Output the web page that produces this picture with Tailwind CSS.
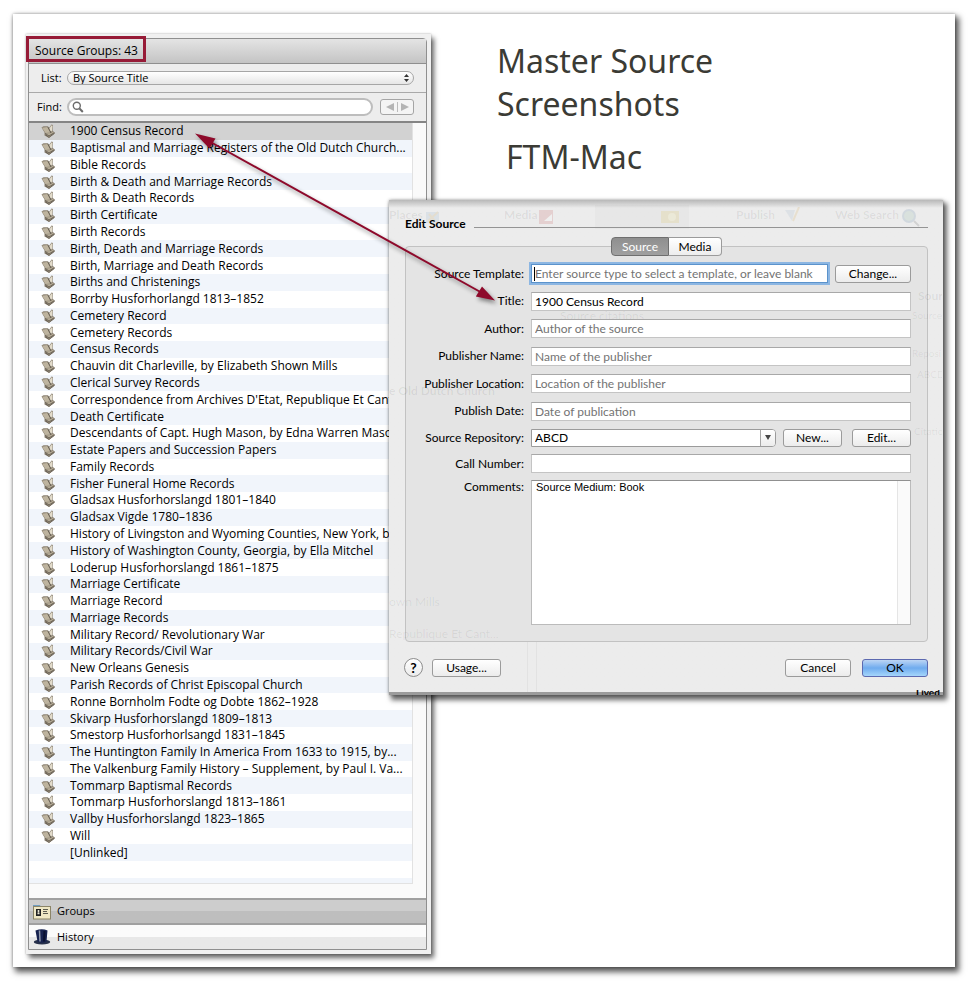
<!DOCTYPE html>
<html lang="en">
<head>
<meta charset="utf-8">
<title>Master Source Screenshots</title>
<script src="https://cdn.jsdelivr.net/npm/@tailwindcss/browser@4"></script>
</head>
<body class="flex min-h-screen bg-white pt-[14px] pr-[14px] pb-[17px] pl-[13px] font-['Open_Sans','Noto_Sans',sans-serif] text-xs text-black">
<svg class="hidden" aria-hidden="true">
  <symbol id="book" viewBox="0 0 16 16">
    <path d="M1.500 4.500 3.500 3.300 8 3.300 9 5 11.500 1.500 13 2 12.500 7.500 15 10 9 15 4.500 12.500 4.500 9.500Z" fill="#8a8172"/>
    <path d="M2 4.700 7.600 4 10.500 9.500 5.500 10Z" fill="#beb49f"/>
    <path d="M9.300 5.500 11.700 2.300 12.500 2.700 11.800 8.500 10.300 8Z" fill="#e3dccb"/>
    <path d="M5 10.500 10.500 10 13 8.500 14.500 10 9 14.200Z" fill="#b3a994"/>
    <path d="M7.800 4 11 10M5.200 10.400 9 13 14.300 9.700" fill="none" stroke="#5b5347" stroke-width=".8"/>
    <path d="M5.500 11.800 9 14.300 14.500 10.500" fill="none" stroke="#5b5347" stroke-width=".7"/>
  </symbol>
</svg>

<main class="relative flex flex-1 bg-white shadow-[3px_4px_6px_1px_rgba(0,0,0,0.65),0_0_3px_rgba(0,0,0,0.35)]">

  <aside class="mt-5 mb-[13px] ml-[13px] flex w-[405px] shrink-0 flex-col bg-[#f0f0f0] pt-[4px] pr-[4px] pb-[4px] pl-[2px] shadow-[3px_4px_5px_rgba(0,0,0,0.6),0_0_2px_rgba(0,0,0,0.3)]">
    <div class="flex flex-1 flex-col rounded-t border border-[#8f8f8f] bg-[#ededed]">
      <header class="relative flex h-[25px] items-center border-b border-[#8f8f8f] bg-linear-to-b from-[#e4e4e4] to-[#c4c4c4] pl-[6px]">
        <h2>Source Groups: 43</h2>
        <span class="absolute -top-[3px] -left-[3px] h-[26px] w-[120px] border-3 border-[#971b37]"></span>
      </header>
      <div class="flex h-[29px] items-center border-b border-[#a9a9a9] pr-3 pl-3 text-[11px]">
        <label for="list" class="w-[26px]">List:</label>
        <span class="relative flex flex-1">
          <select id="list" class="h-[14px] w-full appearance-none rounded-full border border-[#a6a6a6] bg-linear-to-b from-white to-[#e6e6e6] pl-[5px] text-[11px] leading-3"><option>By Source Title</option></select>
          <svg class="pointer-events-none absolute top-[3px] right-[5px] h-2 w-[5px]" viewBox="0 0 5 8"><path d="M0 3 2.500 0 5 3ZM0 5 2.500 8 5 5Z" fill="#333"/></svg>
        </span>
      </div>
      <div class="flex h-[30px] items-center border-b-2 border-[#858585] pr-3 pl-2 text-[11px]">
        <label for="find" class="w-[30px]">Find:</label>
        <span class="relative flex flex-1">
          <input id="find" type="search" class="h-[18px] w-full rounded-full border-2 border-[#bdbdbd] bg-white pl-5">
          <svg class="pointer-events-none absolute top-[3px] left-[5px] size-3" viewBox="0 0 12 12" fill="none" stroke="#6b6b6b"><circle cx="4.800" cy="4.800" r="3.500" stroke-width="1.400"/><path d="m7.500 7.500 3.300 3.500" stroke-width="2"/></svg>
        </span>
        <span class="ml-[7px] flex h-4 w-[34px] items-center justify-center gap-[3px] rounded-[3px] border border-[#a5a5a5] bg-[#f4f4f4]">
          <button aria-label="Previous"><svg class="h-2 w-2" viewBox="0 0 8 8"><path d="M8 0v8L0 4Z" fill="#b4b4b4"/></svg></button>
          <span class="h-[10px] w-px bg-[#bbb]"></span>
          <button aria-label="Next"><svg class="h-2 w-2" viewBox="0 0 8 8"><path d="M0 0v8l8-4Z" fill="#b4b4b4"/></svg></button>
        </span>
      </div>
      <div class="flex flex-1 flex-col bg-[#fafafa] pr-[13px]">
        <ul id="groups" class="grid h-[755px] auto-rows-fr border-r border-[#e2e2e2] bg-white"></ul>
        <div class="h-[6px] border-r border-b border-[#e2e2e2] bg-[#f1f5fb]"></div>
      </div>
      <button class="flex h-[27px] items-center gap-[6px] border-y-2 border-[#a0a0a0] bg-linear-to-b from-[#cdcdcd] from-50% to-[#bebebe] to-50% pl-1 text-[11px]">
        <svg class="h-4 w-[18px]" viewBox="0 0 18 16"><path d="M0 1h7l1 2H0Z" fill="#6f9cc0"/><rect x=".5" y="2.500" width="17" height="12.500" fill="#efe7c4" stroke="#8b8467"/><rect x="3" y="5" width="5" height="7" fill="#222"/><path d="M5.500 6v2.500M4.500 9.500h2" stroke="#e9e6d5" stroke-width="1.600"/><path d="M10 5.500h5M10 7.500h4M10 9.500h5" stroke="#5b5b50"/></svg>
        Groups
      </button>
      <button class="flex h-6 items-center gap-[6px] bg-linear-to-b from-[#fbfbfb] from-50% to-[#e8e8e8] to-50% pl-1 text-[11px]">
        <svg class="h-4 w-[18px]" viewBox="0 0 18 16"><ellipse cx="9" cy="13" rx="8.200" ry="2.600" fill="#27304a"/><path d="M2.500 1.500Q9-.8 14.500 1.500L13.500 12.500Q9 15 4.500 12.500Z" fill="#17224f"/><path d="M6.500 1.500 7 12.500" stroke="#8f97ab" stroke-width="1.500"/><path d="M11.500 2 11 12.500" stroke="#0a1030" stroke-width="2"/></svg>
        History
      </button>
    </div>
  </aside>

  <h1 class="ml-[66px] pt-[25px] font-['Noto_Sans',sans-serif] text-[32px] leading-[43px] text-[#3b3b35]">
    <span class="block">Master Source<br>Screenshots</span>
    <span class="mt-[10px] ml-[9px] block">FTM-Mac</span>
  </h1>

  <form class="absolute top-[186px] left-[376px] h-[495px] w-[554px] bg-[#ececec] bg-linear-to-b from-[#b8b8b8] to-[#ececec] to-[8px] pt-[18px] pr-[15px] pl-4 font-['Lato','Open_Sans',sans-serif] shadow-[3px_4px_5px_1px_rgba(0,0,0,0.6),0_0_3px_rgba(0,0,0,0.35)]" onsubmit="return false">
    <div class="pointer-events-none absolute inset-0 overflow-hidden whitespace-nowrap text-black/7" aria-hidden="true">
      <div class="absolute top-[7px] left-0 flex w-full font-bold"><span class="w-[115px]">Places</span><span>Media</span></div>
      <div class="absolute top-[7px] left-[347px] flex font-bold"><span class="w-[99px]">Publish</span><span>Web Search</span></div>
      <div class="absolute top-[5px] left-[206px] h-6 w-[94px] bg-black/2"></div>
      <svg class="absolute top-[9px] left-[36px] h-4 w-4 opacity-15" viewBox="0 0 16 16" fill="none"><path d="M1 3h13v11H1Z" fill="#7fa5c8"/><path d="M3 12 13 3M4 5l6 7" stroke="#b89030" stroke-width="2"/></svg>
      <svg class="absolute top-[9px] left-[149px] h-4 w-4 opacity-20" viewBox="0 0 16 16"><path d="M1 1h14v14H1Z" fill="#c86464"/><path d="M6 12 14 5v7Z" fill="#fff"/></svg>
      <svg class="absolute top-[9px] left-[272px] h-4 w-5 opacity-20" viewBox="0 0 20 16"><path d="M0 2h18v12H0Z" fill="#dfc560"/><circle cx="11" cy="8" r="4" fill="#fff3a0"/></svg>
      <svg class="absolute top-[7px] left-[395px] h-4 w-4 opacity-15" viewBox="0 0 16 16" fill="none"><path d="M1 3h10L8 14Z" fill="#8fa9c4"/><path d="M15 0 9 14" stroke="#d09a30" stroke-width="2"/></svg>
      <svg class="absolute top-[8px] left-[512px] h-5 w-5 opacity-15" viewBox="0 0 20 20" fill="none"><circle cx="8" cy="8" r="6" fill="#72a58d" stroke="#3f6c93" stroke-width="2"/><path d="m13 13 5 5" stroke="#444" stroke-width="2"/></svg>
      <div class="absolute bottom-[3px] left-[138px] h-[51px] w-[10px] border-x border-black/4"></div>
    </div>

    <div class="relative flex items-start gap-2">
      <h2 class="leading-3 font-bold">Edit Source</h2>
      <span class="mt-[9px] h-px flex-1 bg-[#949494]"></span>
    </div>

    <div class="relative mt-4 rounded border border-[#c2c2c2] bg-[#e4e4e4] px-4 pt-[17px] pb-4">
      <div class="absolute inset-y-0 -right-[15px] -left-[17px] overflow-hidden whitespace-nowrap text-black/7" aria-hidden="true">
        <span class="absolute top-[61px] left-[171px]">Source citations</span>
        <span class="absolute top-[136px] left-0 font-bold">e Old Dutch Church</span>
        <span class="absolute top-[347px] left-0">own Mills</span>
        <span class="absolute top-[379px] left-0">Republique Et Cant...</span>
        <span class="absolute top-[41px] left-[529px] font-bold">Sour</span>
        <span class="absolute top-[62px] left-[523px] text-[10px]">Source</span>
        <span class="absolute top-[100px] left-[523px] text-[10px]">Reposi</span>
        <span class="absolute top-[121px] left-[528px] text-[10px]">ABCD</span>
        <span class="absolute top-[178px] left-[525px] text-[10px]">Citatio</span>
      </div>
      <div class="absolute inset-x-0 -top-[10px] flex justify-center">
        <button type="button" class="h-[19px] w-[58px] rounded-l border border-[#6f6f6f] bg-linear-to-b from-[#8f8f8f] to-[#a0a0a0] leading-4 text-white">Source</button>
        <button type="button" class="h-[19px] w-[53px] rounded-r border border-l-0 border-[#9b9b9b] bg-linear-to-b from-white to-[#ededed] leading-4">Media</button>
      </div>

      <div class="relative flex h-[157px] flex-col justify-between">
        <div class="flex h-[19px] items-center gap-[7px]">
          <label for="tpl" class="w-[102px] shrink-0 text-right whitespace-nowrap">Source Template:</label>
          <input id="tpl" placeholder="Enter source type to select a template, or leave blank" class="h-[19px] min-w-0 flex-1 border border-[#5b93cc] bg-white px-[3px] outline-2 outline-[#8cb6e2] placeholder:text-[#737373]">
          <button type="button" class="h-[18px] w-[76px] rounded-[3px] border border-[#9b9b9b] bg-linear-to-b from-white to-[#ececec] leading-4">Change...</button>
          <span class="absolute top-[3px] left-[112px] h-[14px] w-px bg-black"></span>
        </div>
        <div class="flex h-[19px] items-center gap-[7px]">
          <label for="ttl" class="w-[102px] shrink-0 text-right whitespace-nowrap">Title:</label>
          <input id="ttl" value="1900 Census Record" class="h-[19px] min-w-0 flex-1 border border-t-[#a8a8a8] border-[#c4c4c4] bg-white px-[3px]">
        </div>
        <div class="flex h-[19px] items-center gap-[7px]">
          <label for="aut" class="w-[102px] shrink-0 text-right whitespace-nowrap">Author:</label>
          <input id="aut" placeholder="Author of the source" class="h-[19px] min-w-0 flex-1 border border-t-[#a8a8a8] border-[#c4c4c4] bg-white px-[3px] placeholder:text-[#737373]">
        </div>
        <div class="flex h-[19px] items-center gap-[7px]">
          <label for="pub" class="w-[102px] shrink-0 text-right whitespace-nowrap">Publisher Name:</label>
          <input id="pub" placeholder="Name of the publisher" class="h-[19px] min-w-0 flex-1 border border-t-[#a8a8a8] border-[#c4c4c4] bg-white px-[3px] placeholder:text-[#737373]">
        </div>
        <div class="flex h-[19px] items-center gap-[7px]">
          <label for="loc" class="w-[102px] shrink-0 text-right whitespace-nowrap">Publisher Location:</label>
          <input id="loc" placeholder="Location of the publisher" class="h-[19px] min-w-0 flex-1 border border-t-[#a8a8a8] border-[#c4c4c4] bg-white px-[3px] placeholder:text-[#737373]">
        </div>
        <div class="flex h-[19px] items-center gap-[7px]">
          <label for="dat" class="w-[102px] shrink-0 text-right whitespace-nowrap">Publish Date:</label>
          <input id="dat" placeholder="Date of publication" class="h-[19px] min-w-0 flex-1 border border-t-[#a8a8a8] border-[#c4c4c4] bg-white px-[3px] placeholder:text-[#737373]">
        </div>
      </div>
      <div class="relative mt-[7px] flex flex-col gap-[7px]">
        <div class="flex h-[19px] items-center">
          <label for="rep" class="mr-[7px] w-[102px] shrink-0 text-right whitespace-nowrap">Source Repository:</label>
          <span class="relative flex min-w-0 flex-1">
            <select id="rep" class="h-[18px] w-full appearance-none rounded-r border border-[#9b9b9b] bg-white pl-[3px] leading-4"><option>ABCD</option></select>
            <span class="pointer-events-none absolute top-px right-px flex h-4 w-[15px] items-center justify-center rounded-r-[3px] border-l border-[#a5a5a5] bg-linear-to-b from-white to-[#ececec]"><svg class="h-[5px] w-[6px]" viewBox="0 0 6 5"><path d="M0 0h6L3 5Z" fill="#444"/></svg></span>
          </span>
          <button type="button" class="ml-[7px] h-[18px] w-[59px] rounded-[3px] border border-[#9b9b9b] bg-linear-to-b from-white to-[#ececec] leading-4">New...</button>
          <button type="button" class="ml-[10px] h-[18px] w-[59px] rounded-[3px] border border-[#9b9b9b] bg-linear-to-b from-white to-[#ececec] leading-4">Edit...</button>
        </div>
        <div class="flex h-[19px] items-center gap-[7px]">
          <label for="cal" class="w-[102px] shrink-0 text-right whitespace-nowrap">Call Number:</label>
          <input id="cal" class="h-[19px] min-w-0 flex-1 border border-t-[#a8a8a8] border-[#c4c4c4] bg-white px-[3px]">
        </div>
        <div class="flex items-start gap-[7px]">
          <label for="com" class="w-[102px] shrink-0 pt-px text-right leading-3 whitespace-nowrap">Comments:</label>
          <span class="relative flex min-w-0 flex-1">
            <textarea id="com" class="h-[145px] w-full resize-none border border-t-[#909090] border-[#bbb] bg-white pt-0 pr-4 pl-1 font-['Liberation_Sans',sans-serif] text-[11px] leading-3">Source Medium: Book</textarea>
            <span class="pointer-events-none absolute inset-y-px right-px w-[13px] border-l border-[#e5e5e5] bg-[#fafafa]"></span>
          </span>
        </div>
      </div>
    </div>

    <div class="relative mt-4 flex items-center">
      <button type="button" aria-label="Help" class="-ml-px size-[19px] rounded-full border border-[#8d8d8d] bg-linear-to-b from-white to-[#ececec] text-sm leading-4 font-bold">?</button>
      <button type="button" class="ml-[9px] h-[18px] w-[69px] rounded-[3px] border border-[#9b9b9b] bg-linear-to-b from-white to-[#ececec] leading-4">Usage...</button>
      <button type="button" class="ml-auto h-[18px] w-[66px] rounded-[3px] border border-[#9b9b9b] bg-linear-to-b from-white to-[#ececec] leading-4">Cancel</button>
      <button class="ml-[11px] h-[18px] w-[66px] rounded-[3px] border border-[#5c69b0] bg-linear-to-b from-[#bcd5f4] via-[#6fabee] to-[#a5d6fb] leading-4">OK</button>
    </div>
    <div class="absolute inset-x-0 bottom-0 h-[3px] bg-[#9b9b9b]" aria-hidden="true"></div>
    <div class="absolute right-0 bottom-0 h-[5px] w-[27px] overflow-hidden text-[10px] leading-3 font-bold" aria-hidden="true"><span class="absolute -top-[4px] left-0">Lived</span></div>
  </form>

  <svg class="pointer-events-none absolute top-[110px] left-[170px] h-[190px] w-[330px] drop-shadow-[2px_3px_2px_rgba(0,0,0,0.45)]" viewBox="183 124 330 190" aria-hidden="true">
    <path d="M206 139.500 484 294" stroke="#8e0a2b" stroke-width="2"/>
    <path d="M195 133.500 215.500 138.500 209.500 148.500ZM495 300.500 475.800 296.500 482 286.500Z" fill="#8e0a2b"/>
  </svg>
</main>

<script>
const groups = ["1900 Census Record","Baptismal and Marriage Registers of the Old Dutch Church...","Bible Records","Birth & Death and Marriage Records","Birth & Death Records","Birth Certificate","Birth Records","Birth, Death and Marriage Records","Birth, Marriage and Death Records","Births and Christenings","Borrby Husforhorlangd 1813–1852","Cemetery Record","Cemetery Records","Census Records","Chauvin dit Charleville, by Elizabeth Shown Mills","Clerical Survey Records","Correspondence from Archives D'Etat, Republique Et Cant...","Death Certificate","Descendants of Capt. Hugh Mason, by Edna Warren Mason","Estate Papers and Succession Papers","Family Records","Fisher Funeral Home Records","Gladsax Husforhorslangd 1801–1840","Gladsax Vigde 1780–1836","History of Livingston and Wyoming Counties, New York, by...","History of Washington County, Georgia, by Ella Mitchel","Loderup Husforhorslangd 1861–1875","Marriage Certificate","Marriage Record","Marriage Records","Military Record/ Revolutionary War","Military Records/Civil War","New Orleans Genesis","Parish Records of Christ Episcopal Church","Ronne Bornholm Fodte og Dobte 1862–1928","Skivarp Husforhorslangd 1809–1813","Smestorp Husforhorlsangd 1831–1845","The Huntington Family In America From 1633 to 1915, by...","The Valkenburg Family History – Supplement, by Paul I. Va...","Tommarp Baptismal Records","Tommarp Husforhorslangd 1813–1861","Vallby Husforhorslangd 1823–1865","Will","[Unlinked]",""];
document.getElementById("groups").innerHTML = groups.map((name, i) => {
  const icon = i < 43 ? '<svg class="size-4 shrink-0"><use href="#book"/></svg>' : '<span class="w-4 shrink-0"></span>';
  return `<li class="flex min-h-0 items-center gap-[14px] overflow-hidden pl-[11px] leading-4 whitespace-nowrap first:bg-[#d2d2d2] even:bg-[#f1f5fb]">${icon}<span>${name.replace("&", "&amp;")}</span></li>`;
}).join("");
</script>
</body>
</html>
